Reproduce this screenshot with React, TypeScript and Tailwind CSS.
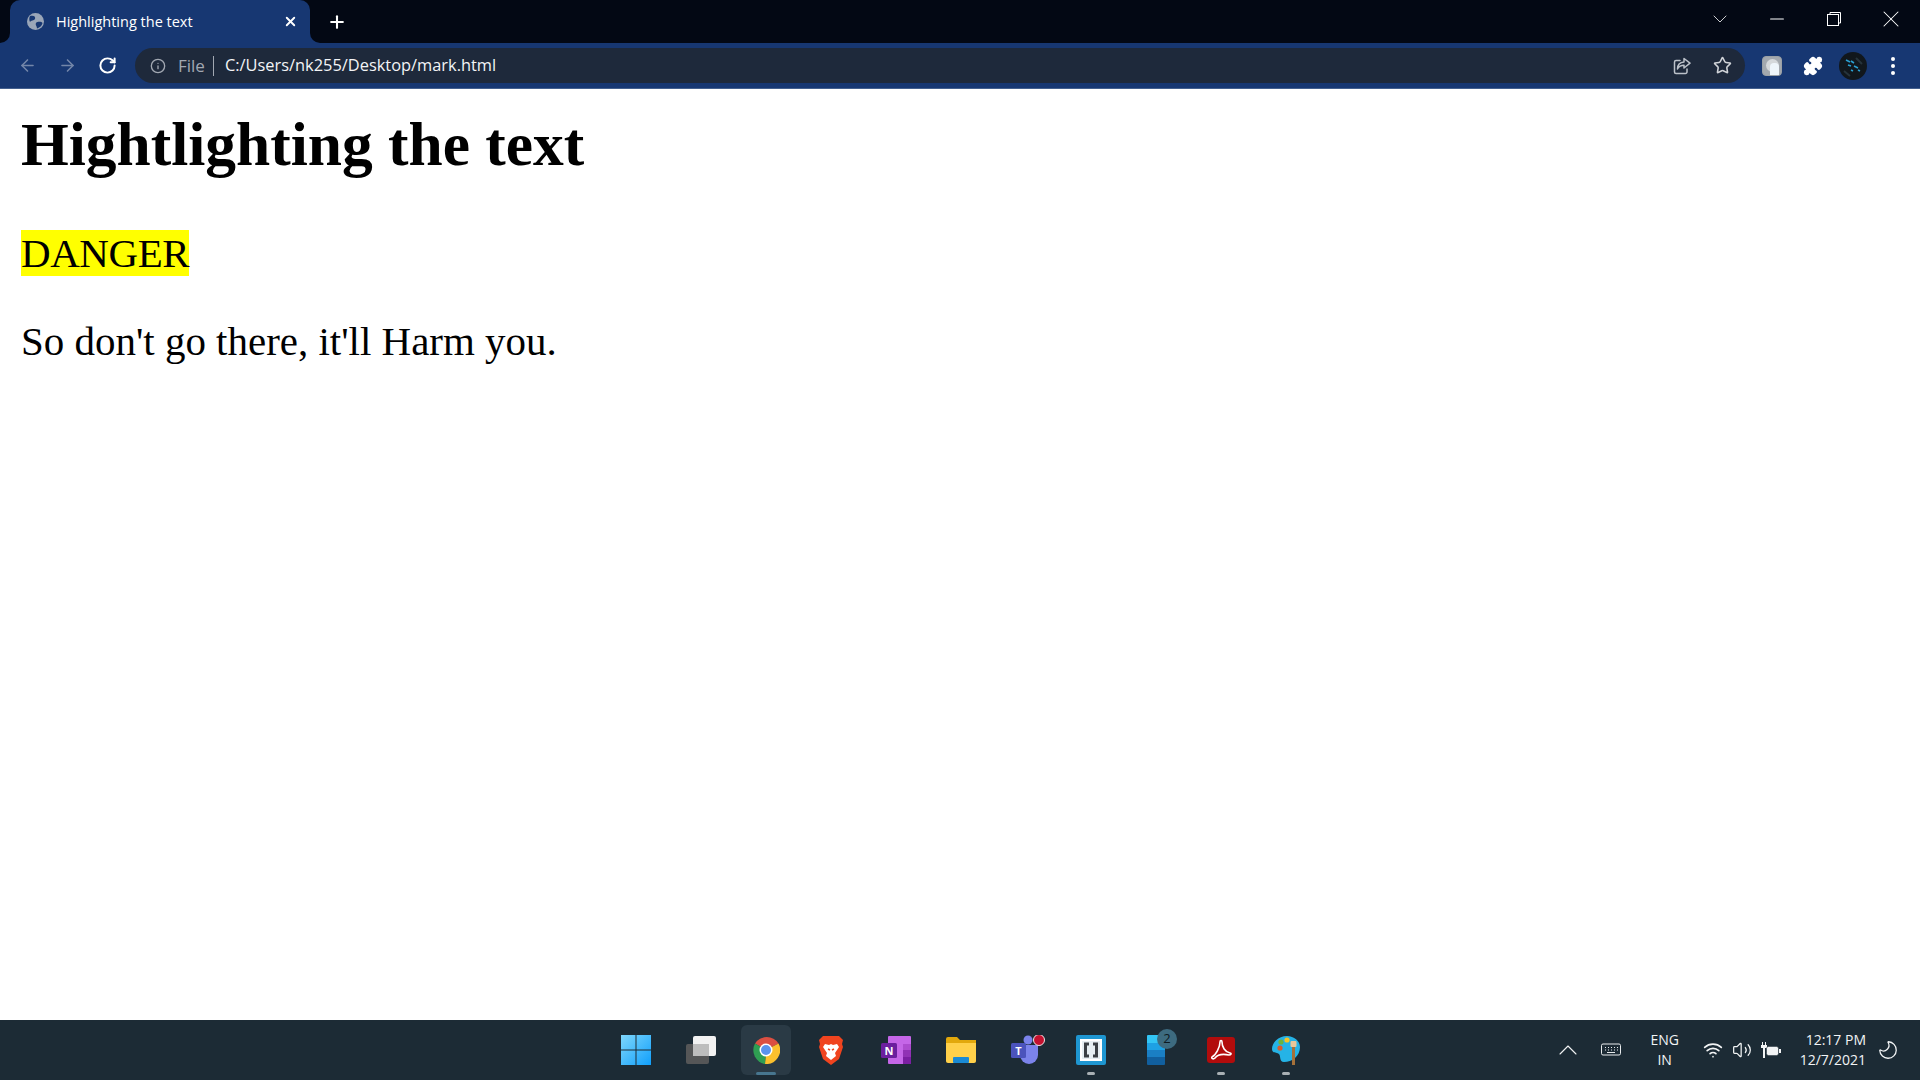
import { Plus, X, ArrowLeft, ArrowRight, RotateCw, Info, Star, Puzzle, ChevronDown, Minus, ChevronUp, Wifi, Volume2, Moon } from 'lucide-react';

function TaskIcon({ children, active, dot }: { children: React.ReactNode; active?: boolean; dot?: boolean }) {
  return (
    <div className={`relative flex h-[50px] w-[50px] items-center justify-center rounded-md ${active ? 'bg-[#2a3a45]' : ''}`}>
      {children}
      {active && <div className="absolute bottom-0 h-[3px] w-5 rounded-full bg-[#47768f]" />}
      {dot && <div className="absolute bottom-0 h-[3px] w-2 rounded-full bg-[#a9b0b4]" />}
    </div>
  );
}

function WindowsLogo() {
  return (
    <svg width="30" height="30" viewBox="0 0 30 30">
      <defs>
        <linearGradient id="win" x1="0" y1="0" x2="1" y2="1">
          <stop offset="0" stopColor="#7fd7fc" />
          <stop offset="1" stopColor="#109ffb" />
        </linearGradient>
      </defs>
      <path d="M0 0H14.5V14.5H0Z M15.5 0H30V14.5H15.5Z M0 15.5H14.5V30H0Z M15.5 15.5H30V30H15.5Z" fill="url(#win)" />
    </svg>
  );
}

function TaskView() {
  return (
    <svg width="32" height="28" viewBox="0 0 32 28">
      <rect x="8" y="0" width="23" height="20" rx="2" fill="#f2f2f2" />
      <rect x="1" y="8" width="23" height="20" rx="2" fill="#5a5a5a" fillOpacity="0.92" />
      <rect x="8" y="8" width="16" height="12" fill="#bdbdbd" />
    </svg>
  );
}

function Chrome() {
  return (
    <svg width="28" height="28" viewBox="0 0 28 28">
      <path d="M14 14 L3 7.5 A14 14 0 0 1 26.5 7.5 Z" fill="#db4f42" />
      <path d="M14 14 L26.5 7.5 A14 14 0 0 1 13 28 Z" fill="#fbc02d" />
      <path d="M14 14 L13 28 A14 14 0 0 1 3 7.5 Z" fill="#2f9e52" />
      <circle cx="14" cy="14" r="6.5" fill="#fff" />
      <circle cx="14" cy="14" r="5" fill="#5a93ee" />
    </svg>
  );
}

function Brave() {
  return (
    <svg width="26" height="30" viewBox="0 0 26 30">
      <path d="M5 1 L21 1 L25 5 L24 9 L25 12 L21 24 L13 30 L5 24 L1 12 L2 9 L1 5 Z" fill="#f0441f" />
      <path d="M7 9 L11 10 L13 9 L15 10 L19 9 L21 12 L17 18 L18 21 L13 25 L8 21 L9 18 L5 12 Z" fill="#fff" />
      <path d="M10 14 L12 15 M16 14 L14 15" stroke="#f0441f" strokeWidth="1.5" />
    </svg>
  );
}

function OneNote() {
  return (
    <svg width="30" height="30" viewBox="0 0 30 30">
      <rect x="7" y="1" width="23" height="28" rx="1" fill="#c566e8" />
      <rect x="22" y="9" width="8" height="6" fill="#ad4ccf" />
      <rect x="22" y="15" width="8" height="7" fill="#9132b5" />
      <rect x="22" y="22" width="8" height="7" fill="#7b1fa2" />
      <rect x="0" y="8" width="16" height="15" rx="1.5" fill="#6b1f9e" />
      <text x="8" y="20" textAnchor="middle" fontSize="11" fontWeight="700" fill="#fff" fontFamily="Open Sans, sans-serif">N</text>
    </svg>
  );
}

function Folder() {
  return (
    <svg width="30" height="26" viewBox="0 0 30 26">
      <path d="M0 2 a2 2 0 0 1 2 -2 h9 l3 3 h16 v20 a2 2 0 0 1 -2 2 h-26 a2 2 0 0 1 -2 -2 Z" fill="#e2a80c" />
      <path d="M0 6 h30 v18 a2 2 0 0 1 -2 2 h-26 a2 2 0 0 1 -2 -2 Z" fill="#ffd04a" />
      <rect x="7" y="20" width="16" height="6" rx="1" fill="#1a8ad4" />
    </svg>
  );
}

function Teams() {
  return (
    <svg width="34" height="30" viewBox="0 0 34 30" className="translate-x-[2px]">
      <circle cx="17" cy="5" r="4.5" fill="#7b83eb" />
      <path d="M9 10 h18 v10 a9 9 0 0 1 -18 0 Z" fill="#7b83eb" />
      <rect x="0" y="8" width="15" height="15" rx="1.5" fill="#4b53bc" />
      <text x="7.5" y="20" textAnchor="middle" fontSize="11" fontWeight="700" fill="#fff" fontFamily="Open Sans, sans-serif">T</text>
      <circle cx="28" cy="5" r="5.5" fill="#c4112f" stroke="#e8e8e8" strokeWidth="1" />
    </svg>
  );
}

function Brackets() {
  return (
    <svg width="30" height="30" viewBox="0 0 30 30">
      <rect width="30" height="30" rx="2" fill="#1e96d1" />
      <rect x="4" y="4" width="22" height="22" fill="#fff" />
      <rect x="6" y="6" width="18" height="18" fill="#e6eef2" />
      <path d="M13 9 H9.5 V21 H13 M17 9 H20.5 V21 H17" fill="none" stroke="#3a3f44" strokeWidth="3" />
    </svg>
  );
}

function Phone() {
  return (
    <div className="relative">
      <svg width="18" height="30" viewBox="0 0 18 30">
        <path d="M0 1 a1 1 0 0 1 1 -1 h16 a1 1 0 0 1 1 1 v7 H0 Z" fill="#32c5f5" />
        <rect y="8" width="18" height="7" fill="#1ea1e4" />
        <rect y="15" width="18" height="7" fill="#1a7fc4" />
        <path d="M0 22 h18 v7 a1 1 0 0 1 -1 1 h-16 a1 1 0 0 1 -1 -1 Z" fill="#115f9e" />
      </svg>
      <div className="absolute left-[10px] top-[-6px] flex h-5 w-5 items-center justify-center rounded-full bg-[#3d6b80] font-['Open_Sans',sans-serif] text-[13px] text-[#0d1a22]">2</div>
    </div>
  );
}

function Acrobat() {
  return (
    <svg width="28" height="26" viewBox="0 0 28 26">
      <rect width="28" height="26" rx="3" fill="#b20c0c" />
      <path d="M5 20 C9 18 13 10 13 5 C13 3 15 3 15 5 C15 10 18 15 23 16 C25 16.5 24 18 22 18 C17 17 11 17 8 21 C6 23 4 21 5 20 Z" fill="none" stroke="#fff" strokeWidth="1.6" />
    </svg>
  );
}

function Paint() {
  return (
    <svg width="30" height="30" viewBox="0 0 30 30" className="translate-x-[1px]">
      <path d="M15 1 C6 1 0 8 0 14 C0 19 5 17 7 19 C9 21 7 27 12 27 C20 27 28 21 28 12 C28 6 22 1 15 1 Z" fill="#25b3e6" />
      <circle cx="8" cy="13" r="2.6" fill="#d95b2b" />
      <circle cx="9" cy="7" r="2.6" fill="#6cb33f" />
      <circle cx="15" cy="5" r="2.6" fill="#f7c325" />
      <rect x="20" y="11" width="3" height="19" fill="#a5713a" />
      <rect x="18.5" y="6" width="6" height="6" rx="1" fill="#e8c79a" />
    </svg>
  );
}

function Keyboard() {
  return (
    <svg width="20" height="14" viewBox="0 0 20 14" fill="none" stroke="#e8ecee" strokeWidth="1">
      <rect x="0.5" y="1" width="19" height="11" rx="1.5" />
      <path d="M4 4.5h1M7 4.5h1M10 4.5h1M13 4.5h1M16 4.5h1M4 7h1M7 7h1M10 7h1M13 7h1M16 7h1M6 9.5h8" />
    </svg>
  );
}

function Battery() {
  return (
    <svg width="20" height="16" viewBox="0 0 20 16">
      <path d="M1.5 0v3M4.5 0v3" stroke="#f2f4f5" strokeWidth="1" />
      <path d="M0 3h6v3H4v10H2V6H0Z" fill="#f2f4f5" />
      <rect x="5.5" y="4.5" width="12" height="9" rx="2" fill="#f2f4f5" stroke="#1c2b35" strokeWidth="0.5" />
      <rect x="18" y="7" width="2" height="4" fill="#f2f4f5" />
    </svg>
  );
}

function Globe() {
  return (
    <svg width="17" height="17" viewBox="0 0 17 17">
      <circle cx="8.5" cy="8.5" r="8.5" fill="#9aa6b8" />
      <path d="M3 3 C6 2 9 3 8 6 C7 8 4 7 3 9 C2 7 2 5 3 3 Z M9 10 C11 8 15 9 15.5 10 C15 13 12 15 10 15.5 C10 13 8 12 9 10 Z" fill="#173772" />
    </svg>
  );
}

function ShareBox() {
  return (
    <svg width="18" height="18" viewBox="0 0 18 18" fill="none" stroke="#bcc1c9" strokeWidth="1.5" strokeLinejoin="round" strokeLinecap="round" className="ml-auto">
      <path d="M7 3.5H3a1.5 1.5 0 0 0-1.5 1.5v10A1.5 1.5 0 0 0 3 16.5h9.5A1.5 1.5 0 0 0 14 15v-3" />
      <path d="M11 1.5l6 4.7-6 4.8V8.3c-3 0-5 1-6.5 3.7 0-4.5 2.5-6.7 6.5-7Z" />
    </svg>
  );
}

function TouchExtension() {
  return (
    <div className="relative flex h-[20px] w-[20px] items-center justify-center overflow-hidden rounded-sm border border-[#9aa0a6] bg-[#a3a8ae]">
      <div className="h-[13px] w-[13px] rounded-full bg-[#d5d8db]" />
      <div className="absolute bottom-0 right-[2px] h-[12px] w-[9px] rounded-t-[4px] bg-[#eef5fb]" />
    </div>
  );
}

function Avatar() {
  return (
    <svg width="28" height="28" viewBox="0 0 28 28">
      <circle cx="14" cy="14" r="14" fill="#11171c" />
      <path d="M7 8l4 2M12 9l3 2M9 13l3 1M15 14l4 2M19 18l2 1M12 18l2 1" stroke="#2a9fd0" strokeWidth="1.6" />
      <path d="M5 19l6 5M17 6l6 6" stroke="#26333b" strokeWidth="2" />
    </svg>
  );
}

export default function App() {
  return (
    <div className="flex h-[1084px] w-[1920px] flex-col overflow-hidden bg-white font-['Liberation_Serif',serif]">
      {/* browser tabs */}
      <div className="flex h-[43px] items-end bg-[#030814] pl-[10px]">
        <div className="relative flex h-[43px] w-[300px] items-center rounded-t-[10px] bg-[#173772] pl-[17px] pr-[12px] font-['Open_Sans',sans-serif] text-[14.5px] text-white">
          <div className="absolute bottom-0 left-[-10px] h-[10px] w-[10px] bg-[#173772]">
            <div className="h-full w-full rounded-br-[10px] bg-[#030814]" />
          </div>
          <div className="absolute bottom-0 right-[-10px] h-[10px] w-[10px] bg-[#173772]">
            <div className="h-full w-full rounded-bl-[10px] bg-[#030814]" />
          </div>
          <Globe />
          <span className="ml-[12px] flex-1">Highlighting the text</span>
          <X size={15} strokeWidth={3} />
        </div>
        <div className="ml-[17px] flex h-[43px] items-center text-white">
          <Plus size={20} strokeWidth={2.5} />
        </div>
        <div className="ml-auto flex h-[37px] items-center self-start pr-[1px] text-white">
          <div className="flex w-[57px] justify-center"><ChevronDown size={24} strokeWidth={0.8} /></div>
          <div className="flex w-[57px] justify-center"><Minus size={22} strokeWidth={1.1} /></div>
          <div className="flex w-[57px] justify-center">
            <svg width="14" height="14" viewBox="0 0 14 14" fill="none" stroke="#fff" strokeWidth="1">
              <rect x="0.5" y="2.5" width="11" height="11" />
              <path d="M3 2.5V0.5H13.5V11H11.5" />
            </svg>
          </div>
          <div className="flex w-[57px] justify-center"><X size={28} strokeWidth={0.9} /></div>
        </div>
      </div>

      {/* toolbar */}
      <div className="flex h-[46px] items-center border-b border-[#44608f] bg-[#173772] pl-[18px]">
        <ArrowLeft size={19} className="text-[#7386a9]" />
        <ArrowRight size={19} className="ml-[21px] text-[#7386a9]" />
        <RotateCw size={19} strokeWidth={2.5} className="ml-[21px] text-white" />
        <div className="ml-[18px] flex h-[35px] w-[1610px] items-center rounded-full bg-[#1e293b] pl-[15px] pr-[13px] font-['Open_Sans',sans-serif] text-[17px]">
          <Info size={16} className="text-[#a2a8b2]" />
          <span className="ml-[12px] text-[#a2a8b2]">File</span>
          <span className="ml-[8px] h-[20px] w-px bg-[#a2a8b2]" />
          <span className="ml-[11px] text-[16.4px] text-[#f3f4f6]">C:/Users/nk255/Desktop/mark.html</span>
          <ShareBox />
          <Star size={19} className="ml-[22px] text-[#d0d3d8]" />
        </div>
        <div className="ml-[17px]"><TouchExtension /></div>
        <Puzzle size={20} fill="#fff" className="ml-[21px] text-white" />
        <div className="ml-[16px]"><Avatar /></div>
        <div className="ml-[24px] flex flex-col gap-[3px]">
          <span className="h-[4px] w-[4px] rounded-full bg-white" />
          <span className="h-[4px] w-[4px] rounded-full bg-white" />
          <span className="h-[4px] w-[4px] rounded-full bg-white" />
        </div>
      </div>

      {/* page */}
      <div className="flex-1 px-[21px] text-black">
        <h1 className="mt-[20px] text-[61.44px] font-bold leading-[70px]">Hightlighting the text</h1>
        <p className="mt-[49px] text-[40.96px] leading-[50px]"><mark className="bg-[#ffff00] tracking-[-0.4px]">DANGER</mark></p>
        <p className="mt-[38px] text-[40.96px] leading-[50px]">So don't go there, it'll Harm you.</p>
      </div>

      {/* taskbar */}
      <div className="mb-[4px] flex h-[60px] items-center bg-[#1c2b35] font-['Open_Sans',sans-serif] text-[#f2f4f5]">
        <div className="ml-[611px] flex items-center gap-[15px]">
          <TaskIcon><WindowsLogo /></TaskIcon>
          <TaskIcon><TaskView /></TaskIcon>
          <TaskIcon active><Chrome /></TaskIcon>
          <TaskIcon><Brave /></TaskIcon>
          <TaskIcon><OneNote /></TaskIcon>
          <TaskIcon><Folder /></TaskIcon>
          <TaskIcon><Teams /></TaskIcon>
          <TaskIcon dot><Brackets /></TaskIcon>
          <TaskIcon><Phone /></TaskIcon>
          <TaskIcon dot><Acrobat /></TaskIcon>
          <TaskIcon dot><Paint /></TaskIcon>
        </div>
        <div className="ml-auto flex items-center pr-[21px]">
          <ChevronUp size={32} strokeWidth={0.8} />
          <div className="ml-[17px]"><Keyboard /></div>
          <div className="ml-[29px] w-[30px] text-center text-[14px] leading-[20px]">ENG<br />IN</div>
          <Wifi size={20} strokeWidth={2} className="ml-[23px]" />
          <Volume2 size={20} strokeWidth={1.5} className="ml-[9px]" />
          <div className="ml-[9px]"><Battery /></div>
          <div className="ml-[19px] text-right text-[14px] leading-[20px]">12:17 PM<br />12/7/2021</div>
          <Moon size={22} strokeWidth={1.4} className="ml-[11px] -scale-x-100" />
        </div>
      </div>
    </div>
  );
}
